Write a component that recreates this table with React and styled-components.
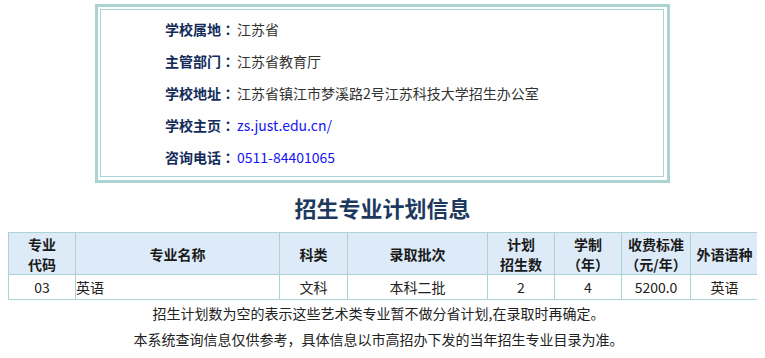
import styled, { createGlobalStyle } from "styled-components";

const GlobalStyle = createGlobalStyle`
    body {
        margin: 0 8px;
        background: #ffffff;
        font-family: "Noto Sans CJK SC", "Liberation Sans", sans-serif;
        font-size: 14px;
        color: #333333;
        text-spacing-trim: space-all;
        font-feature-settings: "halt" 0, "chws" 0;
    }
`;

//学校基本信息
const info = [
    { label: "学校属地", value: "江苏省" },
    { label: "主管部门", value: "江苏省教育厅" },
    { label: "学校地址", value: "江苏省镇江市梦溪路2号江苏科技大学招生办公室" },
    { label: "学校主页", value: "zs.just.edu.cn/", link: true },
    { label: "咨询电话", value: "0511-84401065", link: true },
];

//表头：名称与列宽
const columns = [
    { title: ["专业", "代码"], width: 67 },
    { title: ["专业名称"], width: 204 },
    { title: ["科类"], width: 68 },
    { title: ["录取批次"], width: 140 },
    { title: ["计划", "招生数"], width: 67 },
    { title: ["学制", "（年）"], width: 67 },
    { title: ["收费标准", "（元/年）"], width: 69 },
    { title: ["外语语种"], width: 68 },
];

const rows = [
    ["03", "英语", "文科", "本科二批", "2", "4", "5200.0", "英语"],
];

export default function App() {
    return (
        <>
            <GlobalStyle />
            <SBox>
                <SInner>
                    {info.map((item) => (
                        <SRow key={item.label}>
                            <SLabel>
                                {item.label}
                                <SColon>：</SColon>
                            </SLabel>
                            {item.link ? <SLink>{item.value}</SLink> : <span>{item.value}</span>}
                        </SRow>
                    ))}
                </SInner>
            </SBox>

            <STitle>招生专业计划信息</STitle>

            <STable>
                <colgroup>
                    {columns.map((c, i) => (
                        <col key={i} style={{ width: c.width }} />
                    ))}
                </colgroup>
                <thead>
                    <tr>
                        {columns.map((c, i) => (
                            <STh key={i}>
                                {c.title.map((t) => (
                                    <div key={t}>{t}</div>
                                ))}
                            </STh>
                        ))}
                    </tr>
                </thead>
                <tbody>
                    {rows.map((r, ri) => (
                        <tr key={ri}>
                            {r.map((v, i) => (
                                <STd key={i} $left={i === 1}>{v}</STd>
                            ))}
                        </tr>
                    ))}
                </tbody>
            </STable>

            <SNote>招生计划数为空的表示这些艺术类专业暂不做分省计划,在录取时再确定。</SNote>
            <SNote>本系统查询信息仅供参考，具体信息以市高招办下发的当年招生专业目录为准。</SNote>
        </>
    );
}

const SBox = styled.div`
    width: 564px;
    margin: 4px auto 0;
    border: 3px solid #a9d4d3;
    padding: 2px 3px 3px 2px;
`

const SInner = styled.div`
    border: 1px solid #a9d4d3;
    padding: 3px 0 3px 64px;
`

const SRow = styled.div`
    display: flex;
    align-items: center;
    height: 32px;
    white-space: nowrap;
`

const SLabel = styled.span`
    width: 72px;
    flex-shrink: 0;
    font-weight: bold;
    color: #122b5a;
`

// 冒号居中显示
const SColon = styled.span`
    font-family: "Noto Sans CJK TC", sans-serif;
`

const SLink = styled.span`
    color: #1414f5;
`

const STitle = styled.div`
    margin-top: 9px;
    height: 30px;
    line-height: 30px;
    text-align: center;
    font-size: 22px;
    font-weight: bold;
    color: #1d3a5e;
    margin-bottom: 10px;
`

const STable = styled.table`
    width: 751px;
    border-collapse: collapse;
    table-layout: fixed;
`

const STh = styled.th`
    height: 41px;
    padding: 0;
    background: #ddebf8;
    border: 1px solid #a9d4d3;
    font-weight: bold;
    color: #1a1a1a;
    line-height: 20px;
    text-align: center;
    white-space: nowrap;
`

const STd = styled.td`
    height: 24px;
    padding: 0;
    border: 1px solid #a9d4d3;
    color: #222222;
    text-align: ${(p) => (p.$left ? "left" : "center")};
    white-space: nowrap;
`

const SNote = styled.div`
    height: 26px;
    line-height: 26px;
    text-align: center;
    padding-right: 8px;
    color: #222222;
`
